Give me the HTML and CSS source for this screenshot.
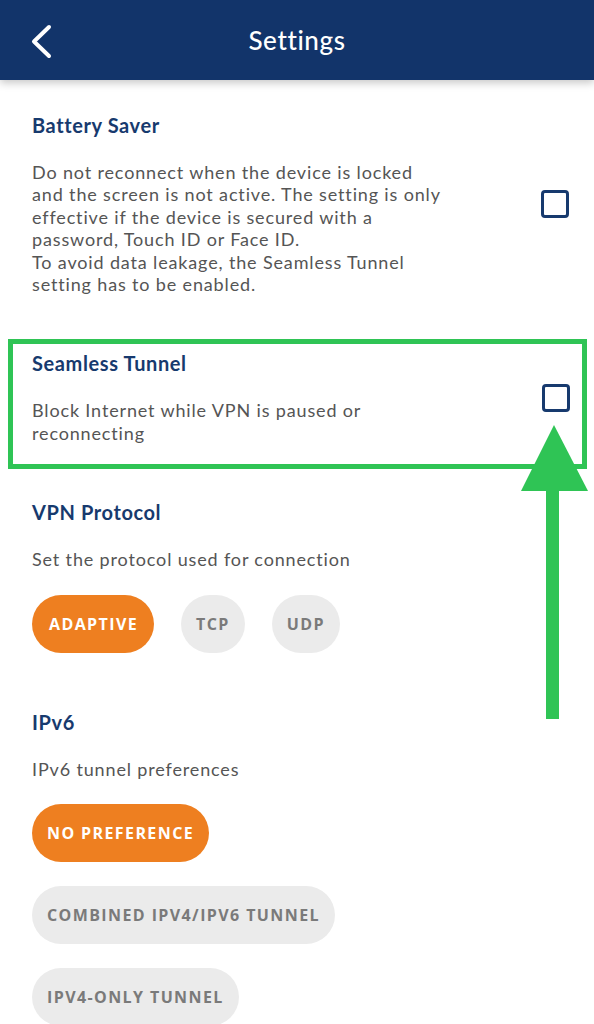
FILE: index.html
```html
<!DOCTYPE html>
<html lang="en">
<head>
<meta charset="utf-8">
<title>Settings</title>
<link rel="stylesheet" href="styles.css">
</head>
<body>
<div class="screen">
  <header class="topbar">
    <button class="back" aria-label="Back">
      <svg width="32" height="44" viewBox="0 0 32 44"><path d="M25 7 L10 21.5 L25 36" fill="none" stroke="#fff" stroke-width="4" stroke-linecap="round" stroke-linejoin="round"/></svg>
    </button>
    <h1 class="title">Settings</h1>
  </header>

  <main class="content">
    <section class="setting battery">
      <div class="setting-text">
        <h2 class="setting-title">Battery Saver</h2>
        <p class="setting-desc">Do not reconnect when the device is locked<br>and the screen is not active. The setting is only<br>effective if the device is secured with a<br>password, Touch ID or Face ID.<br>To avoid data leakage, the Seamless Tunnel<br>setting has to be enabled.</p>
      </div>
      <span class="checkbox"></span>
    </section>

    <section class="setting seamless">
      <div class="setting-text">
        <h2 class="setting-title">Seamless Tunnel</h2>
        <p class="setting-desc">Block Internet while VPN is paused or<br>reconnecting</p>
      </div>
      <span class="checkbox"></span>
    </section>

    <section class="option-group vpn">
      <h2 class="setting-title">VPN Protocol</h2>
      <p class="setting-desc">Set the protocol used for connection</p>
      <div class="pills row">
        <span class="pill active wide">ADAPTIVE</span>
        <span class="pill">TCP</span>
        <span class="pill">UDP</span>
      </div>
    </section>

    <section class="option-group ipv6">
      <h2 class="setting-title">IPv6</h2>
      <p class="setting-desc">IPv6 tunnel preferences</p>
      <div class="pills column">
        <span class="pill active">NO PREFERENCE</span>
        <span class="pill">COMBINED IPV4/IPV6 TUNNEL</span>
        <span class="pill">IPV4-ONLY TUNNEL</span>
      </div>
    </section>
  </main>

  <svg class="arrow" width="70" height="296" viewBox="0 0 70 296">
    <polygon points="33,0 0,66 67,66" fill="#2fc455"/>
    <rect x="25" y="60" width="13" height="234" fill="#2fc455"/>
  </svg>
</div>
</body>
</html>
```

FILE: styles.css
```css
* { box-sizing: border-box; }
html, body { margin: 0; padding: 0; background: #fff; }
body { font-family: Lato, "Noto Sans", sans-serif; }

.screen {
  position: relative;
  width: 594px;
  height: 1024px;
  overflow: hidden;
  background: #fff;
}

.topbar {
  height: 80px;
  background: #12346a;
  display: flex;
  align-items: center;
  justify-content: center;
  position: relative;
  box-shadow: 0 3px 8px rgba(0,0,0,0.22);
  z-index: 2;
}
.back {
  position: absolute;
  left: 24px;
  top: 20px;
  background: none;
  border: 0;
  padding: 0;
  display: flex;
}
.title {
  margin: 0;
  color: #fff;
  font-family: Lato, sans-serif;
  font-weight: 500;
  font-size: 26px;
  letter-spacing: 0.6px;
}

.content {
  display: flex;
  flex-direction: column;
}

.setting {
  display: flex;
  align-items: center;
  justify-content: space-between;
}
.battery {
  padding: 33px 25px 0 32px;
}
.seamless {
  margin: 44px 7px 0 8px;
  border: 5px solid #2fc455;
  padding: 7px 12px 20px 19px;
}

.setting-title {
  margin: 0;
  font-size: 20px;
  line-height: 24px;
  font-weight: 700;
  letter-spacing: 0.6px;
  color: #173a6e;
}
.setting-desc {
  margin: 24px 0 0 0;
  font-size: 18px;
  line-height: 22.4px;
  letter-spacing: 0.85px;
  color: #555;
  white-space: nowrap;
}

.checkbox {
  width: 28px;
  height: 28px;
  border: 3px solid #173a6e;
  border-radius: 4px;
  flex: none;
}

.option-group {
  padding-left: 32px;
}
.vpn { margin-top: 31px; }
.ipv6 { margin-top: 57px; }

.pills {
  display: flex;
  margin-top: 24px;
}
.pills.row { gap: 27px; }
.pills.column {
  flex-direction: column;
  align-items: flex-start;
  gap: 24px;
}
.pill {
  height: 58px;
  padding: 0 15px;
  border-radius: 29px;
  background: #ebebeb;
  color: #7a7a7a;
  font-family: "Open Sans", sans-serif;
  font-weight: 700;
  font-size: 16px;
  letter-spacing: 1.4px;
  display: inline-flex;
  align-items: center;
  justify-content: center;
}
.pill.wide { padding: 0 16px 0 17px; }
.pill.active {
  background: #ee7f20;
  color: #fff;
}

.arrow {
  position: absolute;
  left: 521px;
  top: 425px;
}
```
